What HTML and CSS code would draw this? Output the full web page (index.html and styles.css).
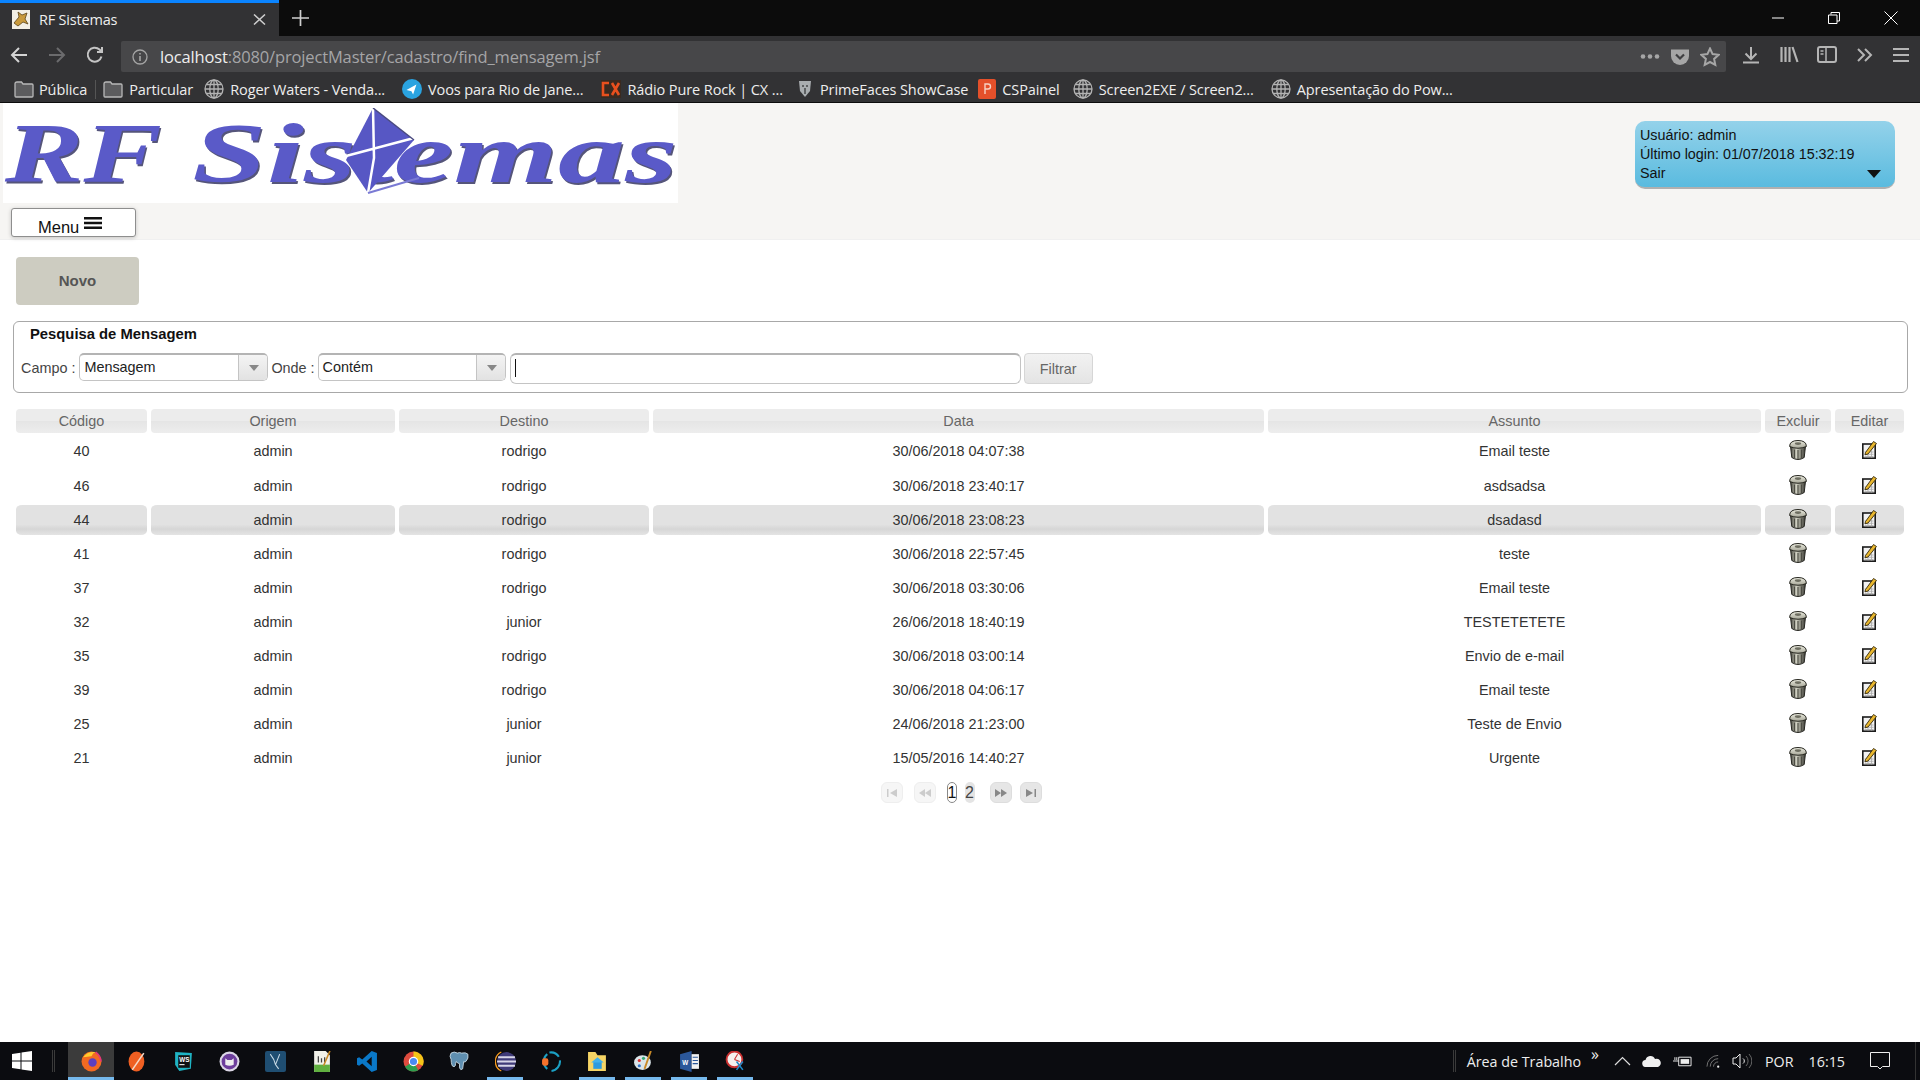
FILE: index.html
```html
<!DOCTYPE html>
<html lang="pt">
<head>
    <meta charset="UTF-8">
    <title>RF Sistemas</title>
    <link rel="stylesheet" href="styles.css">
</head>
<body>
<svg class="defs" width="0" height="0">
    <defs>
        <linearGradient id="can" x1="0" x2="1" y1="0" y2="0">
            <stop offset="0" stop-color="#45453d"/>
            <stop offset=".4" stop-color="#cfcfc1"/>
            <stop offset="1" stop-color="#3a3a33"/>
        </linearGradient>
        <linearGradient id="lid" x1="0" x2="0" y1="0" y2="1">
            <stop offset="0" stop-color="#ecece0"/>
            <stop offset="1" stop-color="#a5a596"/>
        </linearGradient>
        <symbol id="trash" viewBox="0 0 18 20">
            <path d="M1.500 6 L2.800 17.500 Q9 21.500 15.200 17.500 L16.500 6 Z" fill="url(#can)" stroke="#24241f" stroke-width="1"/>
            <path d="M5.500 9.500v8.500M9 10v9M12.500 9.500v8.500" stroke="#4c4c43" stroke-width="1.100"/>
            <path d="M.6 6.500 Q.6 .5 9 .5 Q17.400 .5 17.400 6.500 Q9 10 .6 6.500Z" fill="url(#lid)" stroke="#26261f" stroke-width="1"/>
            <ellipse cx="9" cy="3.600" rx="3.200" ry="1.300" fill="#6e6e61"/>
        </symbol>
        <symbol id="edit" viewBox="0 0 15 19">
            <rect x=".8" y="4" width="12.400" height="14.200" fill="#f2f2f2" stroke="#1c1c1c" stroke-width="1.600"/>
            <path d="M2.500 12h9M2.500 14.300h9M2.500 16.500h9M6 10.500v7M9.500 10.500v7" stroke="#a8a8a8" stroke-width=".8"/>
            <path d="M3.500 12.500 L11.500 1.500 L14.500 3.500 L6 14 L3 14.800 Z" fill="#e9b72e" stroke="#33280a" stroke-width=".9"/>
        </symbol>
        <symbol id="globe" viewBox="0 0 20 20">
            <g fill="none" stroke="#b3b3b3" stroke-width="1.300">
                <circle cx="10" cy="10" r="9"/>
                <ellipse cx="10" cy="10" rx="4.200" ry="9"/>
                <path d="M1 10h18M2.400 5.500h15.200M2.400 14.500h15.200M10 1v18"/>
            </g>
        </symbol>
        <symbol id="folder" viewBox="0 0 20 17">
            <path d="M1 3Q1 1 3 1H7.500l1.500 2H18q1 0 1 1v11q0 1-1 1H2q-1 0-1-1Z" fill="#5c5c5e" stroke="#b8b8b8" stroke-width="1.300"/>
        </symbol>
    </defs>
</svg>

<div class="browser">
    <div class="tabbar">
        <div class="tab">
            <svg class="favicon" viewBox="0 0 18 19" width="18" height="19">
                <rect width="18" height="19" fill="#f3efe4"/>
                <path d="M2 13 L7 7 L6 2 L10 5 L15 3 L13 9 L16 14 L11 12 L6 16 Z" fill="#c99a3c" stroke="#5a4318" stroke-width=".8"/>
            </svg>
            <span class="tab-title">RF Sistemas</span>
            <svg class="tab-close" viewBox="0 0 13 11" width="13" height="11"><path d="M1 .5l11 10M12 .5L1 10.500" stroke="#cfcfcf" stroke-width="1.500"/></svg>
        </div>
        <svg class="new-tab" viewBox="0 0 17 16" width="17" height="16"><path d="M8.500 0v16M0 8h17" stroke="#cfcfcf" stroke-width="1.700"/></svg>
        <div class="window-btns">
            <svg viewBox="0 0 12 12" width="12" height="12"><path d="M0 6h12" stroke="#fff"/></svg>
            <svg viewBox="0 0 12 12" width="12" height="12"><path d="M3 2.500V.5h8.500V9H9M.5 3h8.500v8.500H.5Z" fill="none" stroke="#fff"/></svg>
            <svg viewBox="0 0 14 14" width="14" height="14"><path d="M.5.500l13 13M13.500.5l-13 13" stroke="#fff"/></svg>
        </div>
    </div>

    <div class="navbar">
        <svg class="nav-icon" viewBox="0 0 18 18" width="20" height="18"><path d="M17 9H2M9 2L2 9l7 7" fill="none" stroke="#d4d4d4" stroke-width="2"/></svg>
        <svg class="nav-icon" viewBox="0 0 18 18" width="20" height="18"><path d="M1 9h15M9 2l7 7-7 7" fill="none" stroke="#6b6b6d" stroke-width="2"/></svg>
        <svg class="nav-icon" viewBox="0 0 18 18" width="20" height="18"><path d="M15.500 10.500A7 7 0 1 1 13.500 3.500L16 6M16 1v5h-5" fill="none" stroke="#c4c4c4" stroke-width="2"/></svg>
        <div class="urlbar">
            <svg viewBox="0 0 16 16" width="16" height="16"><circle cx="8" cy="8" r="7" fill="none" stroke="#a5a5a5" stroke-width="1.300"/><path d="M8 7v5M8 4v1.600" stroke="#a5a5a5" stroke-width="1.600"/></svg>
            <span class="url"><span class="url-host">localhost</span>:8080/projectMaster/cadastro/find_mensagem.jsf</span>
            <svg viewBox="0 0 20 5" width="20" height="5"><circle cx="3" cy="2.500" r="2.300" fill="#a6a6a6"/><circle cx="10" cy="2.500" r="2.300" fill="#a6a6a6"/><circle cx="17" cy="2.500" r="2.300" fill="#a6a6a6"/></svg>
            <svg viewBox="0 0 20 18" width="20" height="18"><path d="M1 1.500h18V8a9 9 0 0 1-18 0Z" fill="#a6a6a6"/><path d="M6 6.500l4 4 4-4" fill="none" stroke="#3f3f41" stroke-width="2.200"/></svg>
            <svg viewBox="0 0 20 20" width="20" height="20"><path d="M10 1.500l2.600 5.600 6 .7-4.500 4.100 1.200 6L10 15l-5.300 2.900 1.200-6L1.400 7.800l6-.7Z" fill="none" stroke="#a6a6a6" stroke-width="2"/></svg>
        </div>
        <div class="nav-right">
            <svg viewBox="0 0 16 18" width="16" height="18"><path d="M8 1v11M2.500 7.500L8 13l5.500-5.500M0 16.500h16" fill="none" stroke="#b5b5b5" stroke-width="2"/></svg>
            <svg class="nr-lib" viewBox="0 0 19 17" width="19" height="17"><path d="M1.500 1v15M5.500 1v15M9.500 1v15M12.500 1l5 15" fill="none" stroke="#b5b5b5" stroke-width="2.200"/></svg>
            <svg class="nr-side" viewBox="0 0 20 17" width="20" height="17"><rect x="1" y="1" width="18" height="15" rx="2" fill="none" stroke="#b5b5b5" stroke-width="2"/><path d="M9 1v15M3.500 5h3M3.500 8h3" stroke="#b5b5b5" stroke-width="1.500"/></svg>
            <svg viewBox="0 0 16 16" width="16" height="16"><path d="M1 2l6 6-6 6M8 2l6 6-6 6" fill="none" stroke="#b5b5b5" stroke-width="2"/></svg>
            <svg viewBox="0 0 16 16" width="16" height="16"><path d="M0 2h16M0 8h16M0 14h16" stroke="#b5b5b5" stroke-width="2.200"/></svg>
        </div>
    </div>

    <div class="bookmarks">
        <a class="bookmark bm-first"><svg width="20" height="17"><use href="#folder"/></svg>Pública</a>
        <a class="bookmark bm-partic"><svg width="20" height="17"><use href="#folder"/></svg>Particular</a>
        <a class="bookmark bm-roger"><svg width="20" height="20"><use href="#globe"/></svg>Roger Waters - Venda...</a>
        <a class="bookmark bm-voos">
            <svg viewBox="0 0 18 18" width="20" height="20"><circle cx="9" cy="9" r="9" fill="#2aa3e0"/><path d="M4 10l9-5-3 9-1.500-3Z" fill="#fff"/></svg>Voos para Rio de Jane...</a>
        <a class="bookmark">
            <svg viewBox="0 0 20 18" width="20" height="18"><rect width="20" height="18" fill="#3a2a20"/><path d="M8 3H2v12h6M11 3l7 12M18 3l-7 12" fill="none" stroke="#e8501e" stroke-width="2.600"/></svg>Rádio Pure Rock | CX ...</a>
        <a class="bookmark bm-prime">
            <svg viewBox="0 0 18 18" width="18" height="20"><path d="M3 1h12l-1 10-5 6-5-6Z" fill="#a9adb0"/><path d="M6 6h2M10 6h2M9 8v6" stroke="#45484a" stroke-width="1.500"/></svg>PrimeFaces ShowCase</a>
        <a class="bookmark">
            <svg viewBox="0 0 18 20" width="18" height="20"><rect x="0" width="18" height="20" rx="2" fill="#e4502a"/><path d="M7 15V5h3a2.500 2.500 0 0 1 0 5H7" fill="none" stroke="#f7d2c4" stroke-width="1.400"/></svg>CSPainel</a>
        <a class="bookmark bm-screen"><svg width="20" height="20"><use href="#globe"/></svg>Screen2EXE / Screen2...</a>
        <a class="bookmark"><svg width="20" height="20"><use href="#globe"/></svg>Apresentação do Pow...</a>
    </div>
</div>

<div class="page">
    <div class="page-header">
        <div class="header-left">
            <div class="logo">
                <span class="logo-rf">RF</span><span class="logo-name">Sistemas</span>
                <svg class="logo-sail" viewBox="0 0 85 90" width="85" height="90">
                    <path d="M29 0 L2 52 L24 85 L70 32 Z" fill="#5757c4"/>
                    <path d="M29 0 L30 50 L24 85 M2 48 L70 30" fill="none" stroke="#fff" stroke-width="2.500"/>
                    <path d="M29 0 L70 32" fill="none" stroke="#4a4a80" stroke-width="1.500"/>
                    <path d="M24 85 L75 70" fill="none" stroke="#7a7ad4" stroke-width="2"/>
                </svg>
            </div>
            <button class="menu-btn"><span class="menu-label">Menu</span>
                <svg viewBox="0 0 18 12" width="18" height="12"><path d="M0 1.200h18M0 6h18M0 10.800h18" stroke="#111" stroke-width="2.400"/></svg>
            </button>
        </div>
        <div class="user-box">
            <div>Usuário: admin</div>
            <div>Último login: 01/07/2018 15:32:19</div>
            <div class="user-exit">Sair<span class="arrow-down"></span></div>
        </div>
    </div>

    <div class="content">
        <button class="btn-new">Novo</button>

        <div class="search-panel">
            <div class="search-title">Pesquisa de Mensagem</div>
            <div class="search-row">
                <label>Campo :</label>
                <div class="combo combo-field"><span>Mensagem</span><i class="combo-arrow"></i></div>
                <label>Onde :</label>
                <div class="combo combo-where"><span>Contém</span><i class="combo-arrow"></i></div>
                <div class="search-input"><span class="caret"></span></div>
                <button class="btn-filter">Filtrar</button>
            </div>
        </div>

        <table class="grid">
            <colgroup>
                <col class="c-code"><col class="c-from"><col class="c-to"><col class="c-date"><col class="c-subject"><col class="c-del"><col class="c-edit">
            </colgroup>
            <thead>
                <tr><th>Código</th><th>Origem</th><th>Destino</th><th>Data</th><th>Assunto</th><th>Excluir</th><th>Editar</th></tr>
            </thead>
            <tbody>
                <tr><td>40</td><td>admin</td><td>rodrigo</td><td>30/06/2018 04:07:38</td><td>Email teste</td><td><svg class="ic-trash"><use href="#trash"/></svg></td><td><svg class="ic-edit"><use href="#edit"/></svg></td></tr>
                <tr><td>46</td><td>admin</td><td>rodrigo</td><td>30/06/2018 23:40:17</td><td>asdsadsa</td><td><svg class="ic-trash"><use href="#trash"/></svg></td><td><svg class="ic-edit"><use href="#edit"/></svg></td></tr>
                <tr class="hover"><td>44</td><td>admin</td><td>rodrigo</td><td>30/06/2018 23:08:23</td><td>dsadasd</td><td><svg class="ic-trash"><use href="#trash"/></svg></td><td><svg class="ic-edit"><use href="#edit"/></svg></td></tr>
                <tr><td>41</td><td>admin</td><td>rodrigo</td><td>30/06/2018 22:57:45</td><td>teste</td><td><svg class="ic-trash"><use href="#trash"/></svg></td><td><svg class="ic-edit"><use href="#edit"/></svg></td></tr>
                <tr><td>37</td><td>admin</td><td>rodrigo</td><td>30/06/2018 03:30:06</td><td>Email teste</td><td><svg class="ic-trash"><use href="#trash"/></svg></td><td><svg class="ic-edit"><use href="#edit"/></svg></td></tr>
                <tr><td>32</td><td>admin</td><td>junior</td><td>26/06/2018 18:40:19</td><td>TESTETETETE</td><td><svg class="ic-trash"><use href="#trash"/></svg></td><td><svg class="ic-edit"><use href="#edit"/></svg></td></tr>
                <tr><td>35</td><td>admin</td><td>rodrigo</td><td>30/06/2018 03:00:14</td><td>Envio de e-mail</td><td><svg class="ic-trash"><use href="#trash"/></svg></td><td><svg class="ic-edit"><use href="#edit"/></svg></td></tr>
                <tr><td>39</td><td>admin</td><td>rodrigo</td><td>30/06/2018 04:06:17</td><td>Email teste</td><td><svg class="ic-trash"><use href="#trash"/></svg></td><td><svg class="ic-edit"><use href="#edit"/></svg></td></tr>
                <tr><td>25</td><td>admin</td><td>junior</td><td>24/06/2018 21:23:00</td><td>Teste de Envio</td><td><svg class="ic-trash"><use href="#trash"/></svg></td><td><svg class="ic-edit"><use href="#edit"/></svg></td></tr>
                <tr><td>21</td><td>admin</td><td>junior</td><td>15/05/2016 14:40:27</td><td>Urgente</td><td><svg class="ic-trash"><use href="#trash"/></svg></td><td><svg class="ic-edit"><use href="#edit"/></svg></td></tr>
            </tbody>
        </table>

        <div class="pager">
            <span class="pg-btn off"><svg viewBox="0 0 12 10" width="12" height="10"><path d="M1 1v8h1.500V1ZM11 1L4 5l7 4Z" fill="#ccc"/></svg></span>
            <span class="pg-btn off"><svg viewBox="0 0 14 10" width="14" height="10"><path d="M7 1L1 5l6 4ZM13 1L7 5l6 4Z" fill="#ccc"/></svg></span>
            <span class="pg-num active">1</span>
            <span class="pg-num">2</span>
            <span class="pg-btn"><svg viewBox="0 0 14 10" width="14" height="10"><path d="M1 1l6 4-6 4ZM7 1l6 4-6 4Z" fill="#888"/></svg></span>
            <span class="pg-btn"><svg viewBox="0 0 12 10" width="12" height="10"><path d="M1 1l7 4-7 4ZM9.500 1v8H11V1Z" fill="#888"/></svg></span>
        </div>
    </div>
</div>

<div class="taskbar">
    <svg class="start" viewBox="0 0 20 20" width="20" height="20"><path d="M0 3l8.500-1.200v7.700H0ZM9.500 1.600L20 0v9.500H9.500ZM0 10.500h8.500v7.700L0 17ZM9.500 10.500H20V20L9.500 18.400Z" fill="#fff"/></svg>
    <span class="tb-sep"></span>
    <div class="tb-apps">
        <span class="app active open"><svg viewBox="0 0 20 20"><circle cx="10" cy="10" r="9.500" fill="#f26a22"/><circle cx="11" cy="11" r="4" fill="#5b3fc0"/><path d="M2 6q4-6 12-5-3 1-4 4" fill="#ffcb2e"/><path d="M14 1q5 4 5 9" fill="none" stroke="#e8357a" stroke-width="1.500"/></svg></span>
        <span class="app"><svg viewBox="0 0 20 20"><ellipse cx="9" cy="10" rx="7.500" ry="9.500" fill="#ef5f22"/><path d="M16 2L5 18" stroke="#f5d9c8" stroke-width="1.500"/></svg></span>
        <span class="app"><svg viewBox="0 0 20 20"><path d="M2 1l16 1-1 15-11 2-4-6Z" fill="#1fb4c4"/><rect x="5" y="4" width="11" height="12" fill="#111"/><text x="6" y="10" class="app-letters">WS</text><path d="M6 13h5" stroke="#fff"/></svg></span>
        <span class="app"><svg viewBox="0 0 20 20"><circle cx="10" cy="10" r="9.500" fill="#dcd7e6"/><circle cx="10" cy="10" r="7.500" fill="#6d3e9c"/><path d="M6 13V7l2 1.500h4L14 7v6q-4 2-8 0Z" fill="#eee"/></svg></span>
        <span class="app"><svg viewBox="0 0 20 20"><rect width="20" height="20" rx="2" fill="#1f4e72"/><path d="M5 3q4 5 5 10l3 4M14 3q-2 5-4 10" fill="none" stroke="#c9dbe6" stroke-width="1"/></svg></span>
        <span class="app"><svg viewBox="0 0 20 20"><path d="M3 0h11l4 4v16H3Z" fill="#f2f2ea"/><path d="M3 13h15v7H3Z" fill="#60b040"/><path d="M7 11V5M10 11V7M13 11V6" stroke="#444" stroke-width="1.200"/><path d="M18 0l-6 14" stroke="#c98a28" stroke-width="1.500"/></svg></span>
        <span class="app"><svg viewBox="0 0 20 20"><path d="M14 0l5 2v16l-5 2-9-8-3 2-2-1V7l2-1 3 2Zm0 5.500L9 10l5 4.500Z" fill="#0a78c8"/></svg></span>
        <span class="app"><svg viewBox="0 0 20 20"><circle cx="10" cy="10" r="9.500" fill="#dd4b3e"/><path d="M10 10L1.800 15A9.500 9.500 0 0 0 14.500 18.400Z" fill="#2e9e4f"/><path d="M10 .5A9.500 9.500 0 0 1 18.800 14L10 10Z" fill="#f5c518"/><circle cx="10" cy="10" r="4.500" fill="#fff"/><circle cx="10" cy="10" r="3.400" fill="#4a8af4"/></svg></span>
        <span class="app"><svg viewBox="0 0 20 20"><path d="M2 2q3-2 6 0 2-1 4 0 4-1 6 1 1 4-2 7-1 1-2 0l-1 7q-2 2-3-1v-4q-2 0-3-2-1 2-1 4-1 2-3 0-1-3-1-6-2-3 0-6Z" fill="#5f8fb0" stroke="#cfe0ea" stroke-width=".8"/></svg></span>
        <span class="app open"><svg viewBox="0 0 20 20"><circle cx="11" cy="10" r="9" fill="#3f3a78"/><path d="M3 6h16M2 10h18M3 14h16" stroke="#d8d6e8" stroke-width="1.800"/><path d="M6 1A10 10 0 0 0 6 19" fill="none" stroke="#f79a1d" stroke-width="1.200"/></svg></span>
        <span class="app"><svg viewBox="0 0 20 20"><path d="M8 1.500a9 9 0 0 1 9 4M18 9a9 9 0 0 1-8 10" fill="none" stroke="#1ba0c4" stroke-width="2"/><path d="M6 3A9 9 0 0 0 6 17" fill="none" stroke="#1ba0c4" stroke-width="2"/><rect x="1" y="7" width="6" height="7" rx="2" fill="#f4722b"/></svg></span>
        <span class="app open"><svg viewBox="0 0 20 20"><path d="M1 1h7l2 3h8v15H1Z" fill="#f6d565"/><path d="M6 10h8v7H6Z" fill="#2c9be0"/><path d="M4 11L10 6l6 5" fill="#43b1ec"/></svg></span>
        <span class="app open"><svg viewBox="0 0 20 20"><ellipse cx="9" cy="11" rx="8" ry="7" fill="#dce6ea"/><circle cx="6" cy="9" r="1.500" fill="#d33"/><circle cx="10" cy="7" r="1.500" fill="#3a7"/><circle cx="6" cy="14" r="1.500" fill="#37c"/><path d="M17 0L11 17" stroke="#c98a28" stroke-width="1.800"/></svg></span>
        <span class="app open"><svg viewBox="0 0 20 20"><path d="M1 3l11-3v20L1 17Z" fill="#2b579a"/><path d="M12 3h7v14h-7Z" fill="#f2f2f2"/><path d="M13 6h5M13 9h5M13 12h5" stroke="#2b579a"/><text x="3" y="13" class="app-letters">W</text></svg></span>
        <span class="app open"><svg viewBox="0 0 20 20"><circle cx="9" cy="8" r="7.500" fill="#f4f0ee" stroke="#c93030" stroke-width="1.800"/><path d="M9 8l3-5M9 8l5 2" stroke="#c93030"/><path d="M11 10l6 8M17 10l-6 8" stroke="#1e88c8" stroke-width="1.500"/></svg></span>
    </div>
    <div class="tray">
        <span class="tb-sep"></span>
        <span class="tray-label">Área de Trabalho</span>
        <span class="tray-more">»</span>
        <svg class="t-up" viewBox="0 0 16 10" width="17" height="10"><path d="M.5 9L8 1.500 15.500 9" fill="none" stroke="#ddd" stroke-width="1.200"/></svg>
        <svg class="t-cloud" viewBox="0 0 20 12" width="20" height="12"><path d="M4 12a3.500 3.500 0 0 1-.5-7A5 5 0 0 1 13 4a4 4 0 0 1 3 8Z" fill="#f0f0f0"/></svg>
        <svg class="t-bat" viewBox="0 0 20 12" width="19" height="12"><path d="M6 2h13v9H6Z" fill="none" stroke="#eee"/><path d="M8 4h9v5H8Z" fill="#eee"/><path d="M0 6h6M2 2v3M4 2v3" stroke="#eee"/></svg>
        <svg class="t-wifi" viewBox="0 0 16 14" width="15" height="14"><path d="M1 13a12 12 0 0 1 12-12M4.500 13A8.500 8.500 0 0 1 13 4.500M8 13a5 5 0 0 1 5-5" fill="none" stroke="#777" stroke-width="1"/><circle cx="13" cy="13" r="1.200" fill="#eee"/></svg>
        <svg class="t-spk" viewBox="0 0 20 16" width="20" height="16"><path d="M1 5h3l4-4v14l-4-4H1Z" fill="none" stroke="#eee"/><path d="M11 5.500a3 3 0 0 1 0 5" fill="none" stroke="#eee"/><path d="M14 3a7 7 0 0 1 0 10M17 1a10 10 0 0 1 0 14" fill="none" stroke="#666"/></svg>
        <span class="tray-lang">POR</span>
        <span class="tray-clock">16:15</span>
        <svg class="tray-notify" viewBox="0 0 20 18" width="20" height="18"><path d="M.5.500h19v14h-7l-2.500 2.500L7.500 14.500h-7Z" fill="none" stroke="#eee"/></svg>
        <span class="tray-end"></span>
    </div>
</div>
</body>
</html>
```

FILE: styles.css
```css
html, body{
    margin: 0;
    padding: 0;
}
body{
    width: 1920px;
    height: 1080px;
    overflow: hidden;
    display: flex;
    flex-direction: column;
    background: #fff;
    font-family: "Liberation Sans", Arial, sans-serif;
    font-size: 14.400px;
    color: #333;
}
.defs{
    position: absolute;
}

/* browser */
.browser{
    font-family: "Open Sans", "Noto Sans", sans-serif;
    color: #eee;
    flex: none;
}
.tabbar{
    height: 36px;
    background: #0c0c0c;
    display: flex;
    align-items: center;
}
.tab{
    width: 279px;
    height: 36px;
    box-sizing: border-box;
    border-top: 3px solid #0a84ff;
    background: #323234;
    display: flex;
    align-items: center;
    padding: 0 13px 0 12px;
}
.favicon{
    margin-right: 9px;
}
.tab-title{
    flex: 1;
    font-size: 14.500px;
    letter-spacing: -0.2px;
}
.new-tab{
    margin-left: 13px;
}
.window-btns{
    margin-left: auto;
    display: flex;
    align-items: center;
    gap: 44px;
    padding-right: 22px;
}
.navbar{
    height: 37px;
    background: #323234;
    display: flex;
    align-items: center;
    padding-left: 9px;
}
.nav-icon{
    margin-right: 18px;
}
.nav-icon:nth-child(3){
    margin-right: 16px;
}
.urlbar{
    width: 1605px;
    height: 31px;
    margin-top: 4px;
    box-sizing: border-box;
    background: #474749;
    border-radius: 2px;
    display: flex;
    align-items: center;
    padding: 0 6px 0 11px;
    gap: 10px;
}
.url{
    flex: 1;
    margin-left: 2px;
    font-size: 16.500px;
    letter-spacing: -0.15px;
    color: #a5a5a7;
}
.url-host{
    color: #eee;
}
.nav-right{
    margin-left: 17px;
    display: flex;
    align-items: center;
    gap: 20px;
}
.nr-lib{
    margin-left: 1px;
}
.nr-side{
    margin-left: -2px;
}
.bookmarks{
    height: 26px;
    padding: 3px 0 0 14px;
    background: #323234;
    border-bottom: 1px solid #0c0c0c;
    display: flex;
    align-items: center;
    gap: 13px;
    font-size: 14.500px;
    letter-spacing: -0.1px;
}
.bookmark{
    display: flex;
    align-items: center;
    gap: 6px;
    white-space: nowrap;
}
.bm-first{
    gap: 5px;
    padding-right: 8px;
    margin-right: -6px;
    border-right: 1px solid #555;
}
.bm-partic{
    margin-right: -2px;
}
.bm-roger{
    margin-right: 4px;
}
.bm-voos{
    margin-right: 5px;
}
.bm-prime{
    margin-right: -3px;
}
.bm-screen{
    margin-right: 4px;
}

/* page */
.page{
    flex: 1;
    min-height: 0;
}
.page-header{
    height: 137px;
    background: #f6f5f3;
    display: flex;
    justify-content: space-between;
    box-shadow: inset 0 -1px 0 #f0f0f0;
}
.header-left{
    padding-left: 3px;
}
.logo{
    width: 675px;
    height: 100px;
    background: #fff;
    overflow: hidden;
    position: relative;
    display: flex;
    align-items: center;
    color: #5a5ac8;
    font-family: "Liberation Serif", serif;
    font-style: italic;
    font-weight: bold;
    font-size: 84px;
    line-height: 97px;
    white-space: nowrap;
    text-shadow: 1px 2px 0 #55557a;
}
.logo-rf{
    width: 187px;
    margin-left: 2px;
    transform: scaleX(1.4);
    transform-origin: left;
}
.logo-name{
    transform: scaleX(1.6);
    transform-origin: left;
}
.logo-sail{
    position: absolute;
    left: 341px;
    top: 5px;
}
.menu-btn{
    display: flex;
    align-items: center;
    gap: 5px;
    width: 125px;
    height: 29px;
    margin: 5px 0 0 8px;
    padding: 0 0 0 26px;
    background: #fff;
    border: 1px solid #8e8e8e;
    border-radius: 3px;
    box-shadow: 0 1px 4px rgba(0,0,0,.2);
    font: 16.500px "Liberation Sans", sans-serif;
    color: #111;
}
.menu-label{
    padding-top: 9px;
    line-height: 19px;
}
.user-box{
    width: 260px;
    height: 68px;
    margin: 18px 25px 0 0;
    box-sizing: border-box;
    padding: 5px;
    background: linear-gradient(#94d2ea, #5abbdf);
    border-radius: 10px;
    border-bottom: 2px solid #b0b0b0;
    font-size: 14.350px;
    line-height: 19px;
    color: #111;
}
.user-exit{
    display: flex;
    justify-content: space-between;
    align-items: center;
}
.arrow-down{
    width: 0;
    height: 0;
    margin-right: 9px;
    border-left: 7px solid transparent;
    border-right: 7px solid transparent;
    border-top: 8px solid #111;
}

.content{
    padding: 17px 12px 0 13px;
}
.btn-new{
    display: block;
    width: 123px;
    height: 48px;
    margin-left: 3px;
    padding: 0 0 2px;
    background: #cdccc1;
    border: none;
    border-radius: 4px;
    font: bold 15px "Liberation Sans", sans-serif;
    color: #555;
}
.search-panel{
    height: 72px;
    margin-top: 16px;
    box-sizing: border-box;
    border: 1px solid #a8a8a8;
    border-radius: 6px;
    padding: 2px 0 0 7px;
}
.search-title{
    padding-left: 9px;
    font-weight: bold;
    font-size: 14.800px;
    line-height: 20px;
    color: #111;
}
.search-row{
    display: flex;
    align-items: flex-start;
    gap: 3px;
    margin-top: 9px;
    color: #444;
}
.search-row label{
    line-height: 30px;
}
.combo{
    height: 28px;
    box-sizing: border-box;
    background: #fff;
    border: 1px solid #c4c4c4;
    border-top: 2px solid #b4b4b4;
    border-radius: 5px;
    display: flex;
    align-items: center;
    padding-left: 4px;
    overflow: hidden;
    color: #222;
}
.combo span{
    flex: 1;
    margin-top: -1px;
}
.combo-field{
    width: 189px;
    margin-left: 1px;
}
.combo-where{
    width: 188px;
}
.combo-arrow{
    width: 28px;
    height: 100%;
    background: linear-gradient(#f4f4f4, #e2e2e2);
    border-left: 1px solid #c4c4c4;
    position: relative;
}
.combo-arrow::after{
    content: "";
    position: absolute;
    left: 10px;
    top: 10px;
    border-left: 5px solid transparent;
    border-right: 5px solid transparent;
    border-top: 6px solid #888;
}
.search-input{
    width: 511px;
    height: 31px;
    box-sizing: border-box;
    margin-left: 1px;
    background: #fff;
    border: 1px solid #c4c4c4;
    border-top: 2px solid #b4b4b4;
    border-radius: 6px;
    padding: 4px 0 0 4px;
}
.caret{
    display: block;
    width: 1px;
    height: 18px;
    background: #111;
}
.btn-filter{
    width: 69px;
    height: 31px;
    background: linear-gradient(#f2f2f2, #e4e4e4);
    border: 1px solid #d6d6d6;
    border-radius: 4px;
    font: 14.400px "Liberation Sans", sans-serif;
    color: #666;
}

/* table */
.grid{
    table-layout: fixed;
    width: 1895px;
    margin: 16px 0 0 -1px;
    border-collapse: separate;
    border-spacing: 4px 0;
    text-align: center;
}
.c-code{ width: 131px; }
.c-from{ width: 244px; }
.c-to{ width: 250px; }
.c-date{ width: 611px; }
.c-subject{ width: 493px; }
.c-del{ width: 66px; }
.c-edit{ width: 69px; }
.grid th{
    height: 24px;
    padding: 0;
    font-weight: normal;
    color: #666;
    background: linear-gradient(#ececec 50%, #e5e5e5 50%, #ededed);
    border-radius: 4px;
}
.grid td{
    height: 34px;
    box-sizing: border-box;
    padding: 0;
    vertical-align: middle;
}
.grid tbody tr:first-child td{
    height: 36px;
}
.grid .hover td{
    border-top: 2px solid transparent;
    border-bottom: 2px solid transparent;
    background: linear-gradient(#e2e2e2 65%, #d6d6d6 80%, #e4e4e4) padding-box;
    border-radius: 6px;
}
.ic-trash{
    display: block;
    width: 18px;
    height: 20px;
    margin: -3px auto 0;
}
.ic-edit{
    display: block;
    width: 15px;
    height: 19px;
    margin: -3px auto 0;
}
.pager{
    display: flex;
    justify-content: center;
    align-items: center;
    gap: 8px;
    margin-top: 7px;
    padding-left: 1px;
}
.pg-btn{
    width: 22px;
    height: 21px;
    background: #e6e6e6;
    border: 1px solid #ddd;
    border-radius: 6px;
    display: flex;
    align-items: center;
    justify-content: center;
    box-sizing: border-box;
}
.pg-btn.off{
    background: #f6f6f6;
    border-color: #eee;
    margin-right: 3px;
}
.pg-num{
    width: 10px;
    height: 21px;
    line-height: 21px;
    text-align: center;
    background: #e4e4e4;
    border-radius: 5px;
    font-size: 16px;
    color: #444;
}
.pg-num.active{
    background: #fff;
    border: 1px solid #888;
    box-sizing: border-box;
    color: #111;
    line-height: 19px;
}
.pg-num + .pg-btn{
    margin-left: 7px;
}

/* taskbar */
.taskbar{
    height: 38px;
    flex: none;
    background: #0b0c10;
    display: flex;
    align-items: center;
    color: #eee;
    font-family: "Open Sans", "Noto Sans", sans-serif;
}
.start{
    margin-left: 12px;
}
.tb-sep{
    width: 3px;
    height: 22px;
    margin-left: 20px;
    border-left: 1px solid #3a3a3a;
    border-right: 1px solid #3a3a3a;
    box-sizing: border-box;
}
.tb-apps{
    display: flex;
    margin-left: 13px;
}
.app{
    width: 46px;
    height: 38px;
    position: relative;
    display: flex;
    align-items: center;
    justify-content: center;
}
.app svg{
    width: 21px;
    height: 21px;
}
.app.active{
    background: #3b3b3b;
}
.app.open::after{
    content: "";
    position: absolute;
    left: 5px;
    right: 5px;
    bottom: 0;
    height: 3px;
    background: #76b9ed;
}
.app.active::after{
    left: 0;
    right: 0;
}
.app-letters{
    font: bold 6px "Liberation Sans", sans-serif;
    fill: #fff;
}
.tray{
    margin-left: auto;
    display: flex;
    align-items: center;
    font-size: 14.300px;
}
.tray .tb-sep{
    margin: 0 11px 0 0;
}
.tray-more{
    font-size: 16px;
    margin: -14px 0 0 10px;
}
.t-up{
    margin-left: 15px;
}
.t-cloud{
    margin-left: 11px;
}
.t-bat{
    margin-left: 11px;
}
.t-wifi{
    margin-left: 14px;
}
.t-spk{
    margin-left: 11px;
}
.tray-lang{
    margin-left: 13px;
}
.tray-clock{
    margin-left: 15px;
}
.tray-notify{
    margin-left: 25px;
}
.tray-end{
    width: 1px;
    height: 38px;
    margin: 0 4px 0 25px;
    background: #333;
}
```
